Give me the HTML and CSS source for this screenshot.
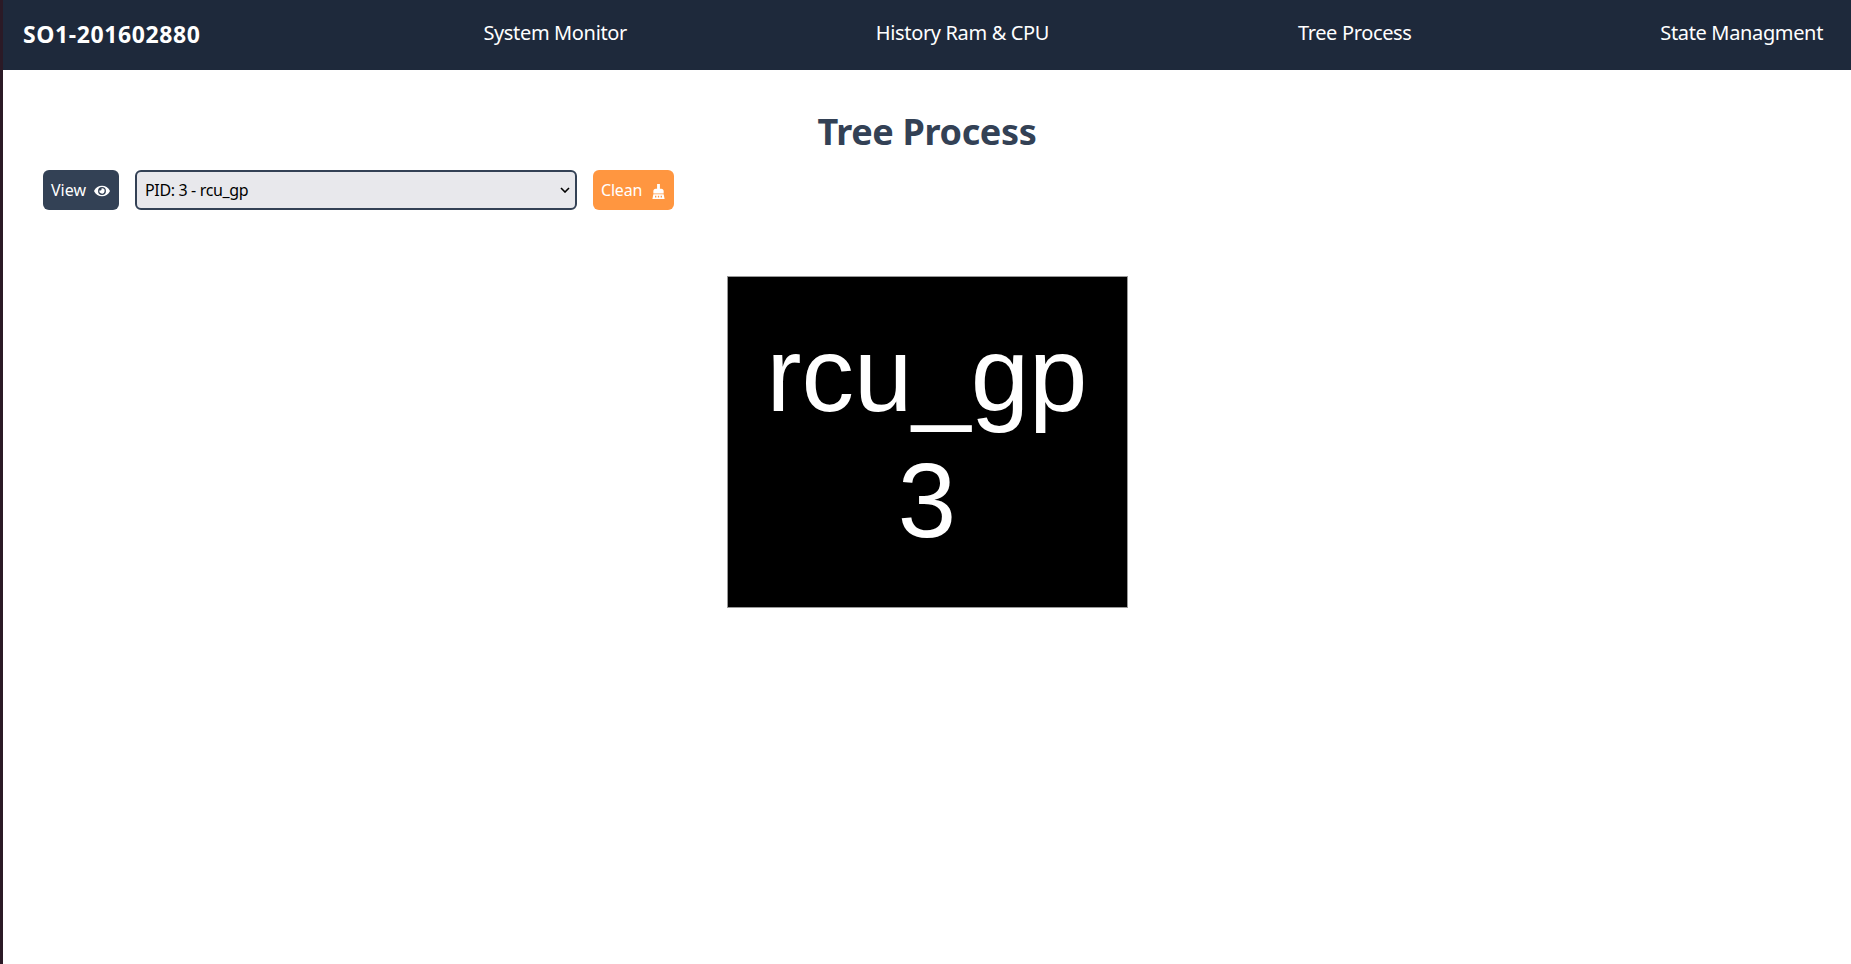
FILE: index.html
```html
<!DOCTYPE html>
<html lang="en">
<head>
    <meta charset="utf-8">
    <title>Tree Process</title>
    <link rel="stylesheet" href="styles.css">
</head>
<body>
<!-- top navigation -->
<nav class="nav">
    <a class="brand" href="#">SO1-201602880</a>
    <a class="nav-link" href="#">System Monitor</a>
    <a class="nav-link" href="#">History Ram &amp; CPU</a>
    <a class="nav-link" href="#">Tree Process</a>
    <a class="nav-link" href="#">State Managment</a>
</nav>
<main class="content">
    <h1 class="title">Tree Process</h1>
    <div class="toolbar">
        <button class="btn btn-view">View
            <svg class="icon-eye" viewBox="0 0 576 512"><path fill="currentColor" d="M572.5 241.4C518.3 135.6 410.9 64 288 64S57.7 135.6 3.5 241.4a32.4 32.4 0 0 0 0 29.2C57.7 376.4 165.100 448 288 448s230.300-71.600 284.500-177.400a32.400 32.400 0 0 0 0-29.200zM288 400a144 144 0 1 1 144-144 143.900 143.900 0 0 1-144 144zm0-240a95.300 95.300 0 0 0-25.300 3.800 47.900 47.900 0 0 1-66.900 66.900A95.800 95.800 0 1 0 288 160z"/></svg>
        </button>
        <select class="pid-select">
            <option>PID: 3 - rcu_gp</option>
        </select>
        <button class="btn btn-clean">Clean
            <svg class="icon-broom" viewBox="0 0 13 16"><path fill="currentColor" fill-rule="evenodd" d="M5 0h3v5h1.500C11 5 12 6 12 7.500V10H1V7.500C1 6 2 5 3.500 5H5zM1 11h11l1 5H0zM2.800 12.500v2h1.400v-2zM5.800 12.500v2h1.400v-2zM8.800 12.500v2h1.400v-2z"/></svg>
        </button>
    </div>
    <div class="graph">
        <div class="node">
            <span>rcu_gp</span>
            <span>3</span>
        </div>
    </div>
</main>
</body>
</html>
```

FILE: styles.css
```css
*{margin: 0;padding: 0;box-sizing: border-box;}
html,body{height: 100%;}
body{background-color: #fff;border-left: 3px solid #2b1a26;font-family: "Noto Sans", "Open Sans", sans-serif;overflow: hidden;}
a{text-decoration: none;color: inherit;}

/* nav bar */
.nav{height: 70px;background-color: #1e293b;color: #fff;display: flex;align-items: center;justify-content: space-between;padding: 0 28px 6px 20px;}
.brand{font-size: 23px;font-weight: 700;margin: 3px 34px 0 0;letter-spacing: .6px;}
.nav-link{font-size: 20px;letter-spacing: -.35px;}

/* page content */
.content{display: flex;flex-direction: column;}
.title{margin-top: 40px;height: 44px;line-height: 44px;font-size: 36px;font-weight: 700;color: #334155;text-align: center;letter-spacing: -.35px;}
.toolbar{display: flex;align-items: center;gap: 16px;margin: 16px 0 0 40px;}
.btn{height: 40px;border: 0;border-radius: 6px;color: #fff;font-family: inherit;font-size: 16px;display: flex;align-items: center;padding: 0 8px;}
.btn-view{width: 76px;background-color: #334155;gap: 8px;}
.btn-clean{width: 81px;background-color: #ff9640;gap: 10px;letter-spacing: -.2px;}
.icon-eye{width: 16px;height: 14px;margin-top: 1px;}
.icon-broom{width: 13px;height: 15px;margin-top: 2px;}
.pid-select{width: 442px;height: 40px;appearance: none;background: #e8e8ec url("data:image/svg+xml,%3Csvg xmlns='http://www.w3.org/2000/svg' viewBox='0 0 10 6'%3E%3Cpath d='M1 1l4 4 4-4' fill='none' stroke='%23000' stroke-width='1.600'/%3E%3C/svg%3E") no-repeat right 5px center / 10px 6px;border: 2px solid #334155;border-radius: 6px;color: #000;font-family: inherit;font-size: 16px;padding-left: 8px;letter-spacing: -.35px;}

/* process node */
.graph{display: flex;justify-content: center;margin-top: 66px;}
.node{width: 401px;height: 332px;background-color: #000;border: 1px solid #999;color: #fff;font-family: "Liberation Sans", Arial, sans-serif;font-size: 105px;line-height: 126px;padding-bottom: 8px;display: flex;flex-direction: column;align-items: center;justify-content: center;}
```
